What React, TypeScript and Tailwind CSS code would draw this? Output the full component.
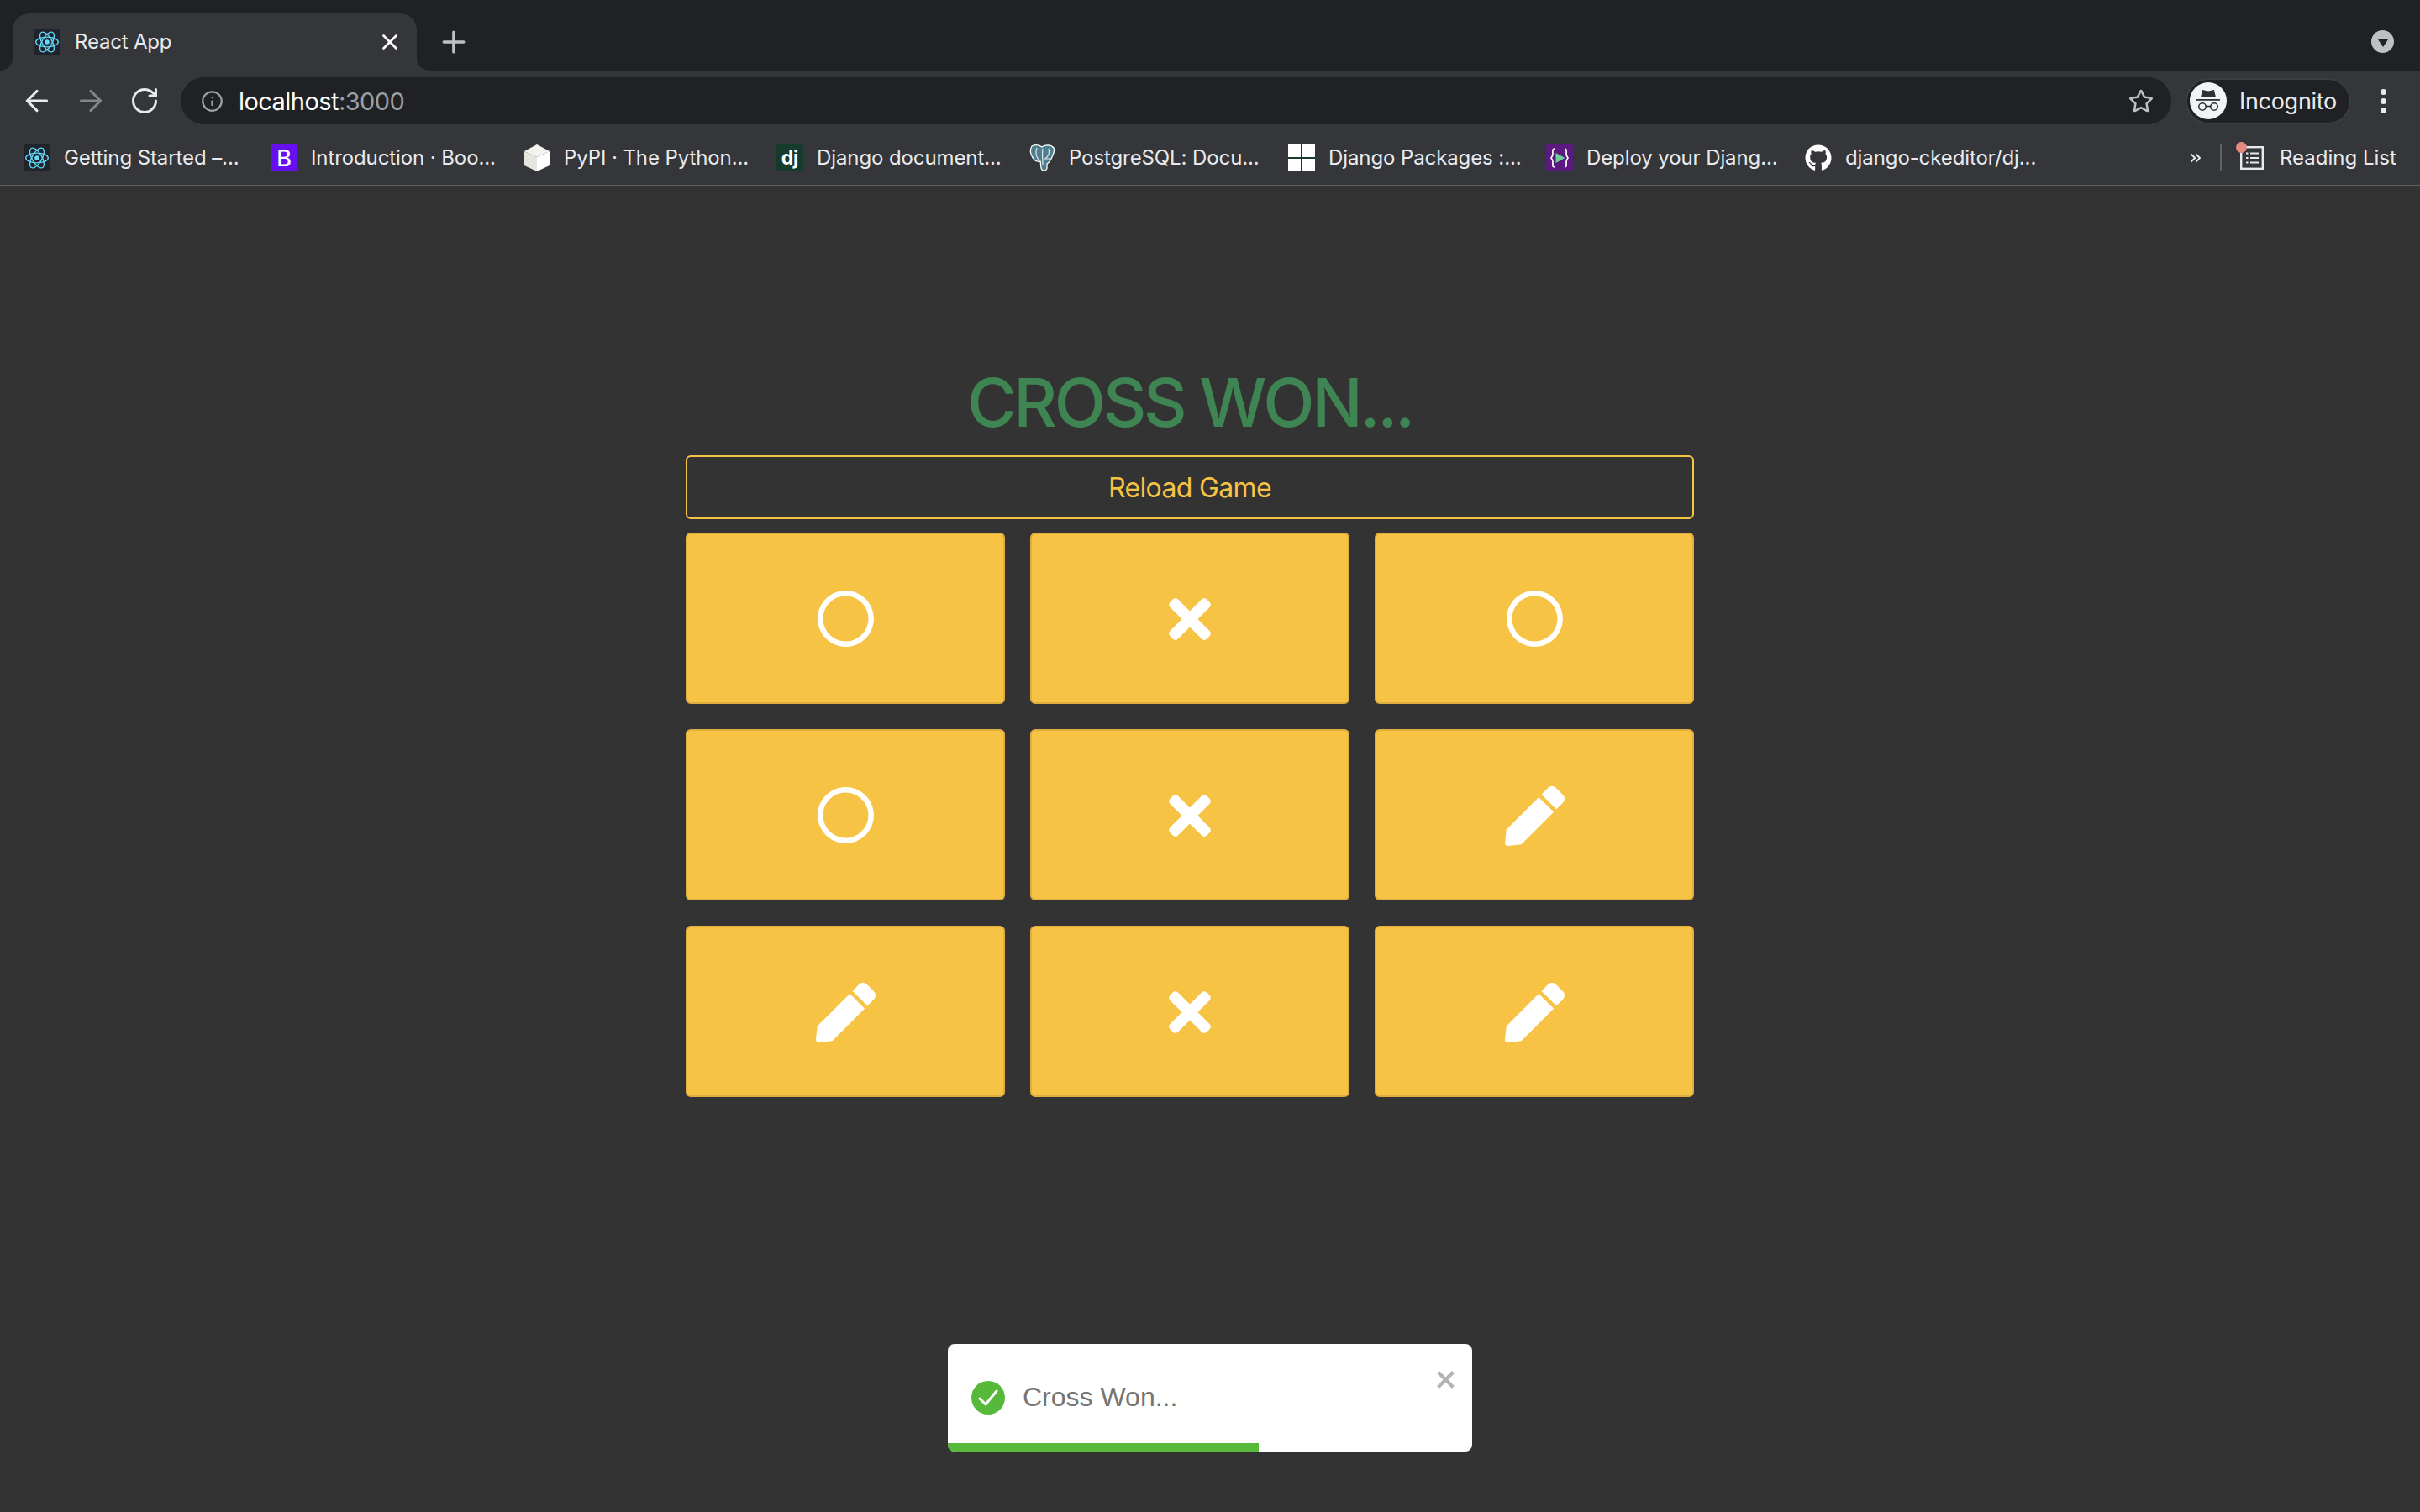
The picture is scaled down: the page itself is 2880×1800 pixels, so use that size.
import { FaGithub, FaPen, FaRegCircle, FaRegStar, FaTimes } from "react-icons/fa";
import { ArrowLeft, ArrowRight, ChevronsRight, Info, Plus, RotateCw, X } from "lucide-react";
import type { ReactNode } from "react";

const uiFont = "font-['Inter','Noto_Sans',sans-serif]";

function ReactIcon() {
  return (
    <span className="flex h-8 w-8 shrink-0 items-center justify-center rounded-[3px] bg-[#20232a]">
      <svg viewBox="-12 -12 24 24" className="h-8 w-8" fill="none" stroke="#61dafb" strokeWidth="1">
        <circle r="2.1" fill="#61dafb" stroke="none" />
        <ellipse rx="10" ry="4.4" />
        <ellipse rx="10" ry="4.4" transform="rotate(60)" />
        <ellipse rx="10" ry="4.4" transform="rotate(120)" />
      </svg>
    </span>
  );
}

function BootstrapIcon() {
  return (
    <span className="flex h-8 w-8 shrink-0 items-center justify-center rounded-[3px] bg-[#6610f2] text-[27px] leading-none font-medium text-white">
      B
    </span>
  );
}

function PypiIcon() {
  return (
    <svg viewBox="0 0 32 32" className="h-8 w-8 shrink-0">
      <path d="M16 0 31 8 16 15 1 8z" fill="#f4f4ef" />
      <path d="M1 8 16 15V32L1 25z" fill="#e6e6df" />
      <path d="M31 8 16 15V32L31 25z" fill="#ffffff" />
    </svg>
  );
}

function DjangoIcon() {
  return (
    <span className="flex h-8 w-8 shrink-0 items-center justify-center rounded-[3px] bg-[#163a2b] text-[23px] leading-none font-bold text-white">
      dj
    </span>
  );
}

function PostgresIcon() {
  return (
    <svg viewBox="0 0 32 32" className="h-8 w-8 shrink-0">
      <path
        d="M4 2C8 0 13 1 16 3 20 0 27 0 30 4 32 8 29 13 27 17 26 20 24 22 22 23L22 28C22 31 18 32 16 30 14 28 15 23 14 20 10 21 8 20 6 17 3 13 1 7 4 2Z"
        fill="#4f7f8f"
        stroke="#ffffff"
        strokeWidth="1.3"
      />
      <path d="M10 4C8 9 9 15 12 18M17 5C16 10 17 16 17 24M24 5C25 9 24 14 20 17H26" fill="none" stroke="#dfe9ee" strokeWidth="1.2" />
    </svg>
  );
}

function PackagesIcon() {
  return (
    <span className="grid h-8 w-8 shrink-0 grid-cols-2 gap-[2px] bg-[#163a2b]">
      <span className="bg-white" />
      <span className="bg-white" />
      <span className="bg-white" />
      <span className="bg-white" />
    </span>
  );
}

function DeployIcon() {
  return (
    <svg viewBox="0 0 32 32" className="h-8 w-8 shrink-0">
      <rect width="32" height="32" fill="#5a1a80" />
      <path d="M11.5 10 22.5 16 11.5 22z" fill="#6fd19a" />
      <path d="M10 5C7 5 8 8 8 11 8 14 6 16 6 16 6 16 8 18 8 21 8 24 7 27 10 27M22 5C25 5 24 8 24 11 24 14 26 16 26 16 26 16 24 18 24 21 24 24 25 27 22 27" fill="none" stroke="#ffffff" strokeWidth="1.7" />
    </svg>
  );
}

function IncognitoIcon() {
  return (
    <svg viewBox="0 0 44 44" className="h-[44px] w-[44px] shrink-0">
      <circle cx="22" cy="22" r="22" fill="#f1f3f4" />
      <path d="M15 9 22 10.5 29 9 31 18H13Z" fill="#303134" />
      <rect x="8" y="20" width="28" height="1.8" fill="#303134" />
      <circle cx="15" cy="29" r="4.2" fill="none" stroke="#303134" strokeWidth="1.6" />
      <circle cx="29" cy="29" r="4.2" fill="none" stroke="#303134" strokeWidth="1.6" />
      <path d="M19 28.5H25" stroke="#303134" strokeWidth="1.6" />
    </svg>
  );
}

function ReadingListIcon() {
  return (
    <span className="relative h-[28px] w-[28px] shrink-0">
      <svg viewBox="0 0 28 28" className="h-[28px] w-[28px]">
        <rect x="1.2" y="1.2" width="25.6" height="25.6" fill="none" stroke="#e8eaed" strokeWidth="2.4" />
        <path d="M7 8.5H9.5M12 8.5H22M7 14H9.5M12 14H22M7 19.5H9.5M12 19.5H22" stroke="#e8eaed" strokeWidth="2.2" />
      </svg>
      <span className="absolute top-[-5px] left-[-5px] h-[13px] w-[13px] rounded-full bg-[#e58a80]" />
    </span>
  );
}

type Bookmark = { icon: ReactNode; label: string; textClass: string };

const bookmarks: Bookmark[] = [
  { icon: <ReactIcon />, label: "Getting Started –...", textClass: "w-[212px]" },
  { icon: <BootstrapIcon />, label: "Introduction · Boo...", textClass: "w-[219px]" },
  { icon: <PypiIcon />, label: "PyPI · The Python...", textClass: "w-[219px]" },
  { icon: <DjangoIcon />, label: "Django document...", textClass: "w-[218px]" },
  { icon: <PostgresIcon />, label: "PostgreSQL: Docu...", textClass: "w-[227px]" },
  { icon: <PackagesIcon />, label: "Django Packages :...", textClass: "w-[225px]" },
  { icon: <DeployIcon />, label: "Deploy your Djang...", textClass: "w-[226px]" },
  { icon: <FaGithub className="h-8 w-8 shrink-0 text-white" />, label: "django-ckeditor/dj...", textClass: "w-[227px]" },
];

type Mark = "o" | "x" | "pen";

const board: Mark[] = ["o", "x", "o", "o", "x", "pen", "pen", "x", "pen"];

function Cell({ mark }: { mark: Mark }) {
  return (
    <button className="flex h-[204px] items-center justify-center rounded-[6px] border-2 border-[#dfae3f] bg-[#f6c344] text-white">
      {mark === "o" && <FaRegCircle className="h-[69px] w-[69px]" />}
      {mark === "x" && <FaTimes className="mt-[2px] h-[72px] w-[50px]" />}
      {mark === "pen" && <FaPen className="mt-[2px] ml-[1px] h-[71px] w-[71px]" />}
    </button>
  );
}

function BrowserChrome() {
  return (
    <header className={`${uiFont} shrink-0 text-white`}>
      <div className="flex h-[84px] items-end bg-[#202124] pl-[15px]">
        <div className="relative flex h-[68px] w-[481px] items-center rounded-t-[20px] bg-[#35363a] pr-[17px] pl-[25px]">
          <span className="absolute bottom-0 left-[-15px] h-[15px] w-[15px] bg-[#35363a]">
            <span className="block h-full w-full rounded-br-[15px] bg-[#202124]" />
          </span>
          <span className="absolute right-[-15px] bottom-0 h-[15px] w-[15px] bg-[#35363a]">
            <span className="block h-full w-full rounded-bl-[15px] bg-[#202124]" />
          </span>
          <ReactIcon />
          <span className="ml-[17px] flex-1 text-[24px] leading-none tracking-[-0.2px] text-[#e8eaed]">React App</span>
          <X className="h-[30px] w-[30px] text-white" strokeWidth={2.2} />
        </div>
        <Plus className="mb-[14px] ml-[24px] h-[40px] w-[40px] text-[#bdc1c6]" strokeWidth={2.2} />
        <span className="mr-[31px] mb-[21px] ml-auto flex h-[27px] w-[27px] items-center justify-center rounded-full bg-[#bdc1c6]">
          <span className="mt-[3px] h-0 w-0 border-x-[6px] border-t-[9px] border-x-transparent border-t-[#202124]" />
        </span>
      </div>

      <div className="flex h-[72px] items-center bg-[#35363a] pl-[24px]">
        <ArrowLeft className="h-[40px] w-[40px] text-[#e8eaed]" strokeWidth={1.8} />
        <ArrowRight className="ml-[24px] h-[40px] w-[40px] text-[#80868b]" strokeWidth={1.8} />
        <RotateCw className="ml-[26px] h-[36px] w-[36px] text-[#e8eaed]" strokeWidth={2} />
        <div className="ml-[25px] flex h-[56px] w-[2369px] items-center rounded-full bg-[#202124] pr-[21px] pl-[24px]">
          <Info className="h-[27px] w-[27px] text-[#9aa0a6]" strokeWidth={2} />
          <span className="ml-[18px] flex-1 text-[29px] leading-none tracking-[-0.55px] text-white">
            localhost<span className="text-[#9aa0a6]">:3000</span>
          </span>
          <FaRegStar className="h-[30px] w-[30px] text-[#bdc1c6]" />
        </div>
        <div className="ml-[17px] flex h-[55px] w-[197px] items-center rounded-full border-2 border-[#3c3d41] bg-[#202124] pl-[3px]">
          <IncognitoIcon />
          <span className="ml-[15px] text-[27px] leading-none tracking-[-0.3px] text-[#e8eaed]">Incognito</span>
        </div>
        <span className="ml-[35px] flex flex-col gap-[4px]">
          <span className="h-[7px] w-[7px] rounded-full bg-[#e8eaed]" />
          <span className="h-[7px] w-[7px] rounded-full bg-[#e8eaed]" />
          <span className="h-[7px] w-[7px] rounded-full bg-[#e8eaed]" />
        </span>
      </div>

      <div className="flex h-[66px] items-center border-b-2 border-[#5f6064] bg-[#35363a] pl-[28px]">
        {bookmarks.map((b) => (
          <div key={b.label} className="mr-[34px] flex items-center">
            {b.icon}
            <span className={`${b.textClass} ml-[16px] text-[24px] leading-none tracking-[-0.1px] whitespace-nowrap text-[#e8eaed]`}>{b.label}</span>
          </div>
        ))}
        <ChevronsRight className="ml-[146px] h-[20px] w-[20px] text-[#e8eaed]" strokeWidth={2.4} />
        <span className="ml-[19px] h-[32px] w-[2px] bg-[#5f6064]" />
        <span className="ml-[22px] flex">
          <ReadingListIcon />
        </span>
        <span className="ml-[19px] text-[24px] leading-none whitespace-nowrap text-[#e8eaed]">Reading List</span>
      </div>
    </header>
  );
}

export default function App() {
  return (
    <div className="relative flex h-[1800px] w-[2880px] flex-col overflow-hidden bg-[#333333]">
      <BrowserChrome />

      <main className={`${uiFont} ml-[816px] w-[1200px] pt-[211px]`}>
        <h1 className="text-center text-[80px] leading-[92px] font-medium tracking-[-3.4px] text-[#3f8554]">CROSS WON...</h1>
        <button className="mt-[17px] flex h-[76px] w-full items-center justify-center rounded-[6px] border-2 border-[#f6c344] pt-[2px] text-[32px] leading-none tracking-[-0.65px] text-[#f6c344]">
          Reload Game
        </button>
        <div className="mt-[16px] grid grid-cols-3 gap-[30px]">
          {board.map((m, i) => (
            <Cell key={i} mark={m} />
          ))}
        </div>
      </main>

      <div className="absolute top-[1600px] left-[1128px] h-[128px] w-[624px] overflow-hidden rounded-[8px] bg-white font-['Liberation_Sans',Arial,sans-serif]">
        <div className="flex h-full items-center pl-[28px]">
          <svg viewBox="0 0 40 40" className="h-[40px] w-[40px] shrink-0">
            <circle cx="20" cy="20" r="20" fill="#56b93a" />
            <path d="M10 21 17 28 30 12" fill="none" stroke="#fff" strokeWidth="3" strokeLinecap="round" strokeLinejoin="round" />
          </svg>
          <span className="mb-[2px] ml-[21px] text-[32px] leading-none text-[#757575]">Cross Won...</span>
        </div>
        <svg viewBox="0 0 14 16" className="absolute top-[26px] right-[16px] h-[32px] w-[28px]" fill="#b3b3b3">
          <path d="M7.71 8.23l3.75 3.75-1.48 1.48-3.75-3.75-3.75 3.75L1 11.98l3.75-3.75L1 4.48 2.48 3l3.75 3.75L9.98 3l1.48 1.48-3.75 3.75z" />
        </svg>
        <div className="absolute bottom-0 left-0 h-[10px] w-[370px] bg-[#56b93a]" />
      </div>
    </div>
  );
}
